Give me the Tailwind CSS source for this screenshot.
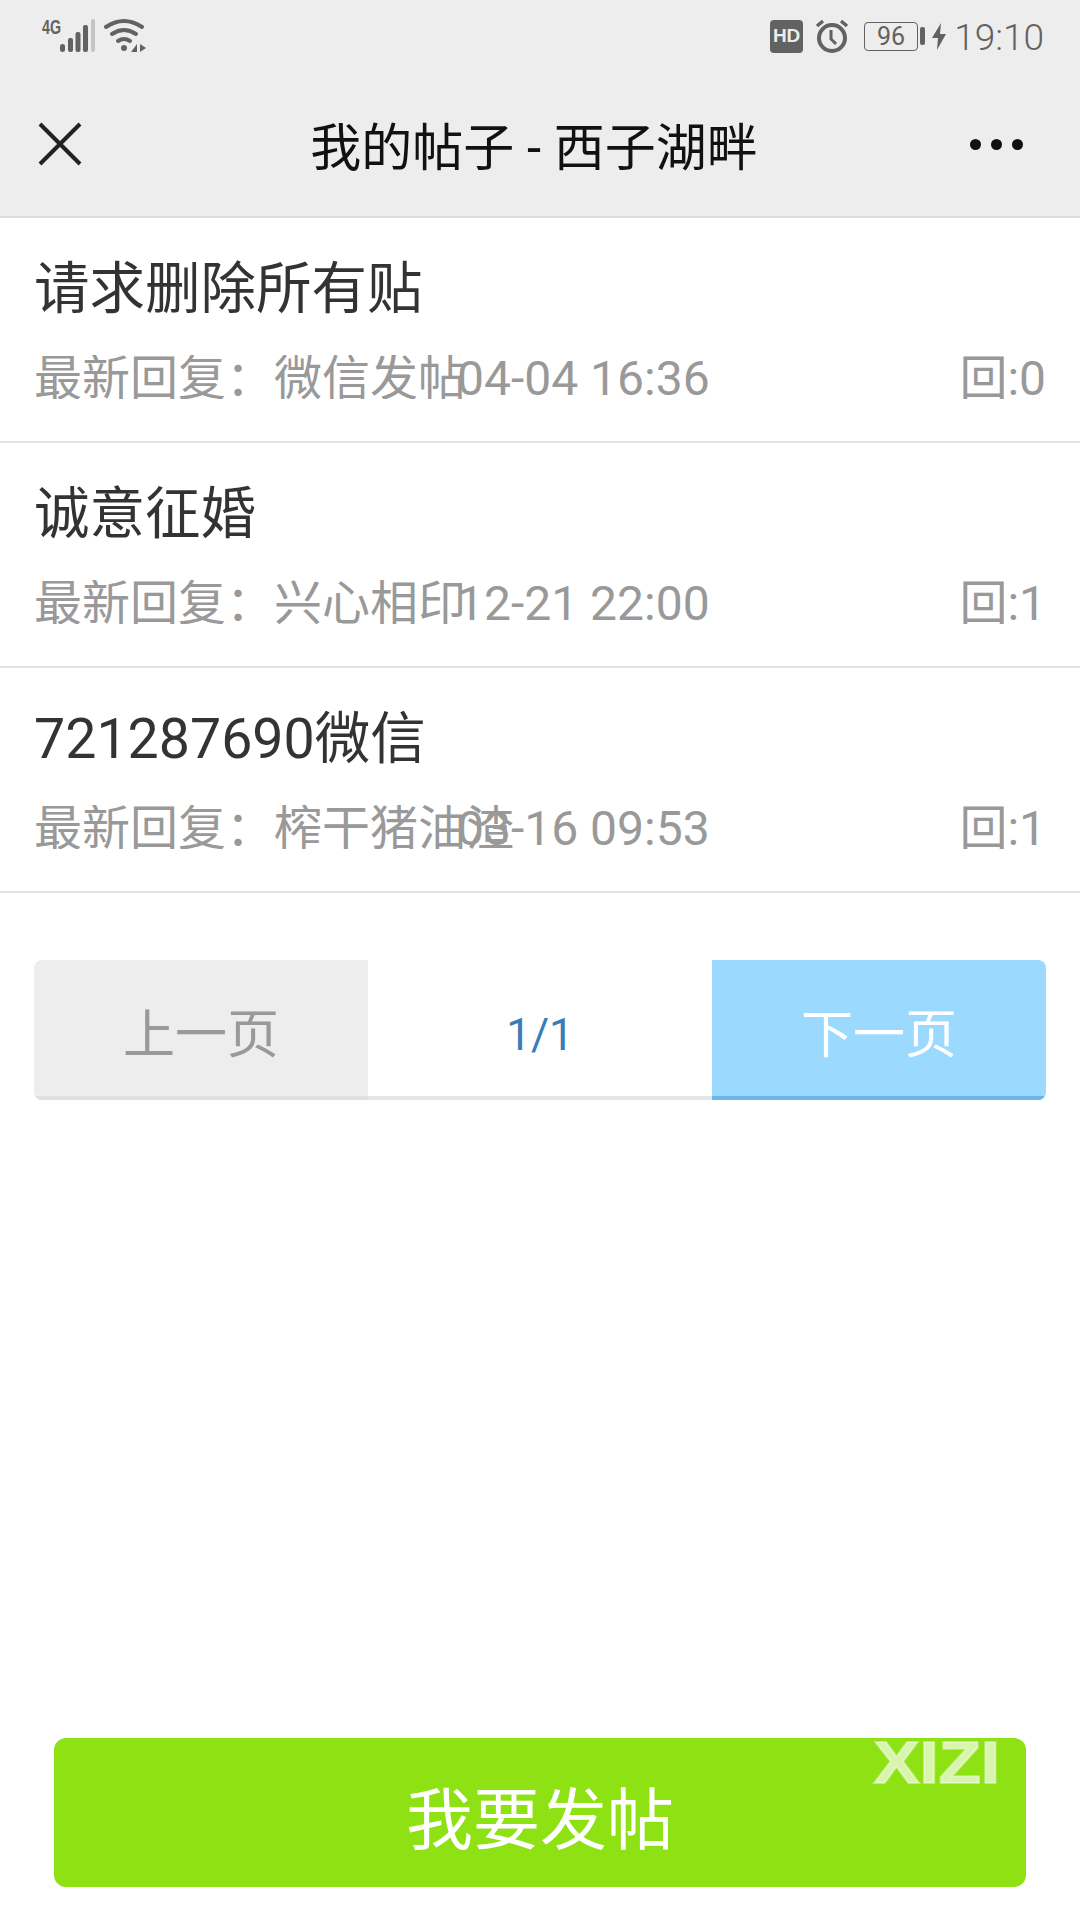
<!DOCTYPE html>
<html>
    <head>
        <meta charset="UTF-8">
        <meta name="viewport" content="width=device-width, initial-scale=1.0">
        <script src="https://cdn.jsdelivr.net/npm/@tailwindcss/browser@4"></script>
        <title>我的帖子 - 西子湖畔</title>
    </head>
    <body class="bg-white font-['Roboto','Noto_Sans_CJK_SC',sans-serif]">
        <div class="w-[1080px] h-[1920px] flex flex-col overflow-hidden">
            <!-- status bar -->
            <div class="h-[72px] bg-[#ededed] flex items-center justify-between pl-[42px] pr-[36px] text-[#626262]">
                <div class="flex items-center gap-[9px]">
                    <div class="relative w-[53px] h-[36px]">
                        <span class="absolute left-0 top-[-3px] text-[21px] font-bold leading-[24px] scale-x-[0.68] origin-left font-['Liberation_Sans']">4G</span>
                        <svg class="absolute left-0 top-0" width="53" height="36" viewBox="0 0 53 36">
                            <rect x="18" y="26" width="5" height="8" rx="2.500" fill="#626262"/>
                            <rect x="26" y="20" width="5" height="14" rx="2" fill="#626262"/>
                            <rect x="33.500" y="14" width="5" height="20" rx="2" fill="#626262"/>
                            <rect x="41" y="7" width="5" height="27" rx="2" fill="#626262"/>
                            <rect x="49" y="1" width="4" height="33" rx="2" fill="#c4c4c4"/>
                        </svg>
                    </div>
                    <svg width="42" height="36" viewBox="0 0 42 36" fill="none" stroke="#626262" stroke-width="4" stroke-linecap="round">
                        <path d="M2 9 Q20 -3 38 9"/>
                        <path d="M8 16 Q20 8 32 16"/>
                        <path d="M14 23 Q20 19 26 23"/>
                        <circle cx="20" cy="30" r="3" fill="#626262" stroke="none"/>
                        <path d="M33 26 L33 34 L27 34 Z" fill="#626262" stroke="none"/>
                        <path d="M36 26 L36 34 L42 30 Z" fill="#626262" stroke="none"/>
                    </svg>
                </div>
                <div class="flex items-center">
                    <div class="w-[33px] h-[33px] bg-[#626262] rounded-[4px] flex items-center justify-center text-[#ededed] text-[19px] font-bold font-['Liberation_Sans']">HD</div>
                    <svg class="ml-[12px]" width="34" height="34" viewBox="0 0 34 34" fill="none" stroke="#626262">
                        <circle cx="17" cy="19" r="13" stroke-width="4"/>
                        <path d="M16 11 L16 20 L21 25" stroke-width="3"/>
                        <path d="M2 7 L8 2 M26 2 L32 7" stroke-width="3.500"/>
                    </svg>
                    <div class="ml-[15px] w-[54px] h-[29px] border-[1.500px] border-[#626262] rounded-[4px] flex items-center justify-center text-[25px] leading-none">96</div>
                    <div class="ml-[2px] w-[5px] h-[18px] bg-[#626262] rounded-[2px]"></div>
                    <svg class="ml-[7px]" width="14" height="27" viewBox="0 0 14 27" fill="#626262">
                        <path d="M9 0 L0 15 L6 15 L5 27 L14 11 L8 11 Z"/>
                    </svg>
                    <span class="ml-[8px] text-[37px] leading-none font-light mt-[2px]">19:10</span>
                </div>
            </div>
            <!-- title bar -->
            <div class="h-[146px] bg-[#ededed] border-b-2 border-[#dcdcdc] flex items-center justify-between pl-[38px] pr-[57px]">
                <svg width="44" height="44" viewBox="0 0 44 44" stroke="#222" stroke-width="4" class="mb-[1px]">
                    <path d="M2 2 L42 42 M42 2 L2 42"/>
                </svg>
                <div class="text-[#111] text-[51px] leading-none ml-[16px] mt-[8px]">我的帖子 - 西子湖畔</div>
                <div class="flex gap-[10px]">
                    <div class="w-[11px] h-[11px] rounded-full bg-[#111]"></div>
                    <div class="w-[11px] h-[11px] rounded-full bg-[#111]"></div>
                    <div class="w-[11px] h-[11px] rounded-full bg-[#111]"></div>
                </div>
            </div>
            <!-- posts -->
            <div class="flex flex-col">
                <div class="h-[225px] border-b-2 border-[#e3e3e3] pl-[34px] pr-[34px] pt-[40px]">
                    <div class="text-[55.500px] leading-[64px] text-[#333]">请求删除所有贴</div>
                    <div class="mt-[33px] h-[44px] overflow-y-clip flex text-[#999] text-[48px] leading-[48px]">
                        <div class="w-[423px] whitespace-nowrap">最新回复：微信发帖</div>
                        <div>04-04 16:36</div>
                        <div class="ml-auto">回:0</div>
                    </div>
                </div>
                <div class="h-[225px] border-b-2 border-[#e3e3e3] pl-[34px] pr-[34px] pt-[40px]">
                    <div class="text-[55.500px] leading-[64px] text-[#333]">诚意征婚</div>
                    <div class="mt-[33px] h-[44px] overflow-y-clip flex text-[#999] text-[48px] leading-[48px]">
                        <div class="w-[423px] whitespace-nowrap">最新回复：兴心相印</div>
                        <div>12-21 22:00</div>
                        <div class="ml-auto">回:1</div>
                    </div>
                </div>
                <div class="h-[225px] border-b-2 border-[#e3e3e3] pl-[34px] pr-[34px] pt-[40px]">
                    <div class="text-[55.500px] leading-[64px] text-[#333]">721287690微信</div>
                    <div class="mt-[33px] h-[44px] overflow-y-clip flex text-[#999] text-[48px] leading-[48px]">
                        <div class="w-[423px] whitespace-nowrap">最新回复：榨干猪油渣</div>
                        <div>03-16 09:53</div>
                        <div class="ml-auto">回:1</div>
                    </div>
                </div>
            </div>
            <!-- pager -->
            <div class="mt-[67px] mx-[34px] h-[140px] flex rounded-[8px] overflow-hidden text-[52px]">
                <div class="w-[334px] bg-[#ededed] border-b-4 border-[#e0e0e0] text-[#999] flex items-center justify-center pt-[15px]">上一页</div>
                <div class="flex-1 bg-white border-b-4 border-[#e6e6e6] text-[#3a7cb8] text-[44px] flex items-center justify-center pt-[13px]">1/1</div>
                <div class="w-[334px] bg-[#9cd9ff] border-b-4 border-[#6ab8ea] text-white flex items-center justify-center pt-[15px]">下一页</div>
            </div>
            <!-- post button -->
            <div class="relative mt-auto mb-[33px] mx-[54px] h-[149px] bg-[#8ee213] rounded-[12px] flex items-center justify-center text-white text-[67px] pt-[18px]">
                我要发帖
                <span class="absolute right-[26px] top-[-5px] text-[60px] font-bold font-['Liberation_Sans'] text-white/65 leading-[60px] scale-x-[1.15] origin-right [-webkit-text-stroke:2px_rgba(255,255,255,0.4)]">XIZI</span>
            </div>
        </div>
    </body>
</html>
